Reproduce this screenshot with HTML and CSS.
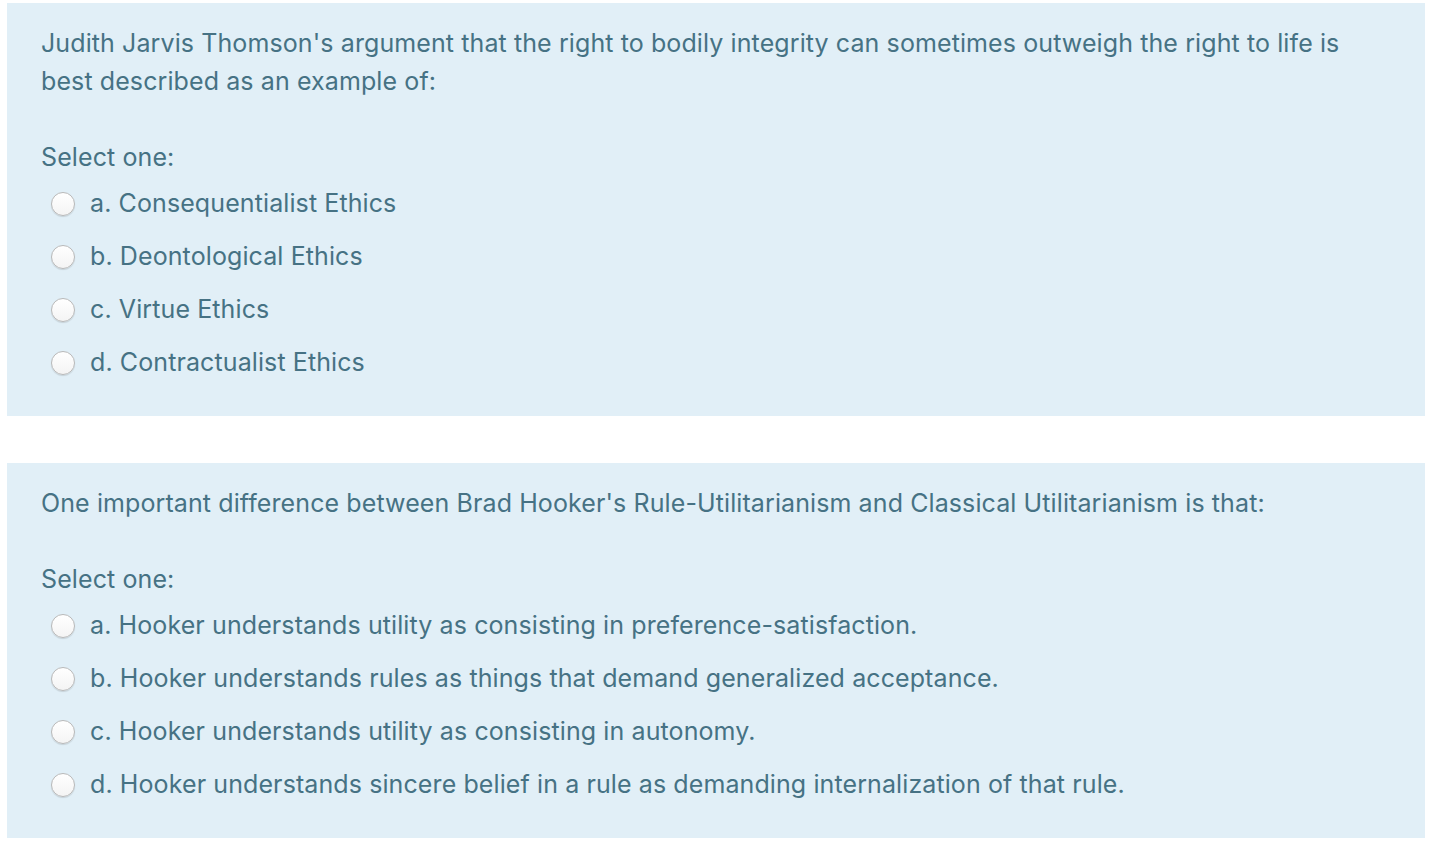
FILE: index.html
```html
<!DOCTYPE html>
<html>
<head>
<meta charset="utf-8">
<link rel="stylesheet" href="styles.css">
</head>
<body>
<div class="que">
  <div class="formulation">
    <p class="qtext">Judith Jarvis Thomson's argument that the right to bodily integrity can sometimes outweigh the right to life is best described as an example of:</p>
    <div class="prompt">Select one:</div>
    <div class="answer">
      <label class="opt"><span class="radio"></span><span>a. Consequentialist Ethics</span></label>
      <label class="opt"><span class="radio"></span><span>b. Deontological Ethics</span></label>
      <label class="opt"><span class="radio"></span><span>c. Virtue Ethics</span></label>
      <label class="opt"><span class="radio"></span><span>d. Contractualist Ethics</span></label>
    </div>
  </div>
</div>
<div class="que">
  <div class="formulation">
    <p class="qtext">One important difference between Brad Hooker's Rule-Utilitarianism and Classical Utilitarianism is that:</p>
    <div class="prompt">Select one:</div>
    <div class="answer">
      <label class="opt"><span class="radio"></span><span>a. Hooker understands utility as consisting in preference-satisfaction.</span></label>
      <label class="opt"><span class="radio"></span><span>b. Hooker understands rules as things that demand generalized acceptance.</span></label>
      <label class="opt"><span class="radio"></span><span>c. Hooker understands utility as consisting in autonomy.</span></label>
      <label class="opt"><span class="radio"></span><span>d. Hooker understands sincere belief in a rule as demanding internalization of that rule.</span></label>
    </div>
  </div>
</div>
</body>
</html>
```
FILE: styles.css
```css
html, body {
  background: #ffffff;
}
body {
  margin: 3px 13px 0 7px;
  display: flex;
  flex-direction: column;
  gap: 47px;
  font-family: Inter, "Noto Sans", sans-serif;
  font-size: 25px;
  letter-spacing: 0.1px;
  line-height: 38px;
  color: #467284;
}
.formulation {
  background: #e1eff7;
  padding: 21px 34px 28px 34px;
}
.qtext {
  margin: 0 0 38px 0;
}
.prompt {
  height: 38px;
}
.answer {
  display: flex;
  flex-direction: column;
}
.opt {
  display: flex;
  align-items: center;
  height: 53px;
  padding-left: 10px;
}
.radio {
  width: 22px;
  height: 22px;
  border-radius: 50%;
  border: 1px solid #b9b9b9;
  background: linear-gradient(#ffffff, #f4f4f4);
  box-shadow: 0 1px 1px rgba(0,0,0,0.12);
  margin-right: 15px;
  flex: none;
  position: relative;
  top: 1px;
}
```
